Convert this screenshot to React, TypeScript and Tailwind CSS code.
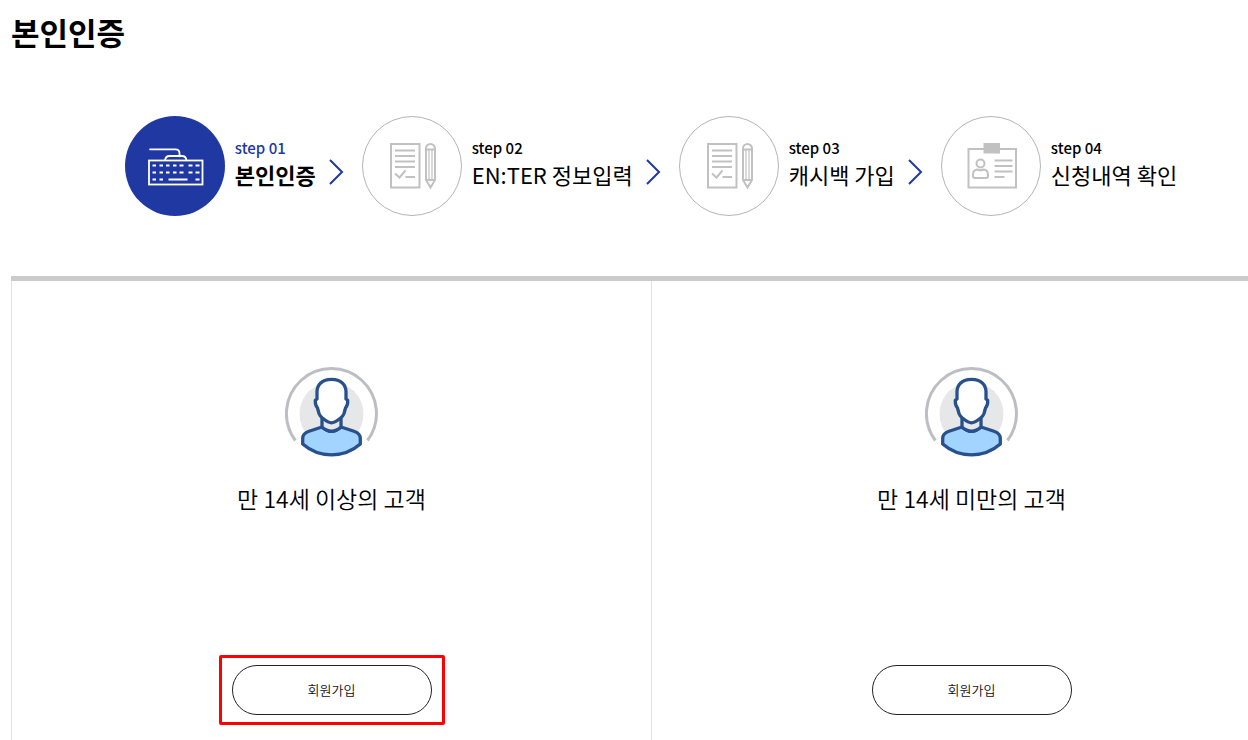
import type { ReactNode } from 'react'

function KeyboardIcon() {
    return (
        <svg viewBox="0 0 100 100" className="size-full" fill="none" stroke="#fff" strokeWidth="1.8" aria-hidden="true">
            <path d="M25 33.300h25.500q4 0 4 4v3" strokeLinecap="round" />
            <path d="M40 44.500q.5-4.500 4.500-4.500h12.500q4 0 4.500 4.500" />
            <rect x="24" y="44.500" width="53.500" height="24" />
            <path d="M27.500 49.500H31M34.500 49.500H38M41 49.500h3.500M48 49.500h3.500M54.500 49.500h4M63.500 49.500h4M70.500 49.500h4" />
            <path d="M27.500 56.500H31M34.500 56.500H38M41 56.500h3.500M48 56.500h3.500M54.500 56.500h4M63.500 56.500h4M70.500 56.500h4" />
            <path d="M27.500 63.500H31M34.500 63.500H38M43.500 63.500h19M70.500 63.500h4" />
        </svg>
    )
}

function FormIcon() {
    return (
        <svg viewBox="1 1 98 98" className="size-full" fill="none" stroke="#c1c1c1" strokeWidth="2" aria-hidden="true">
            <rect x="29" y="28" width="28.500" height="43.500" />
            <path d="M33 34.500h20M33 40h20M33 45.500h20M33 51h20M43.500 61H53M33 57.500l4.500 4 6-7" />
            <path d="M64 64V32.500a4.500 4.500 0 0 1 9 0V64L68.500 71.500zM64 33.500h9M64 64h9" />
            <path d="M67 33.500V64M70 33.500V64" strokeWidth="1.200" />
            <path d="M67 69h3L68.500 72z" fill="#c1c1c1" stroke="none" />
        </svg>
    )
}

function IdCardIcon() {
    return (
        <svg viewBox="1 1 98 98" className="size-full" fill="none" stroke="#c1c1c1" strokeWidth="2" aria-hidden="true">
            <rect x="27.500" y="33" width="47.500" height="38.500" />
            <rect x="42.500" y="27" width="16.500" height="10.500" fill="#c1c1c1" stroke="none" />
            <circle cx="39.500" cy="47.500" r="4" />
            <path d="M36.500 53.500q3 1.500 6 0 4.500 0 4.500 5.500v1q0 2-2 2h-11q-2 0-2-2v-1q0-5.500 4.500-5.500z" />
            <path d="M53.500 44.500h18M53.500 50h18M53.500 55.500h18M53.500 61h10" />
        </svg>
    )
}

function PersonIcon() {
    return (
        <svg viewBox="15 11 94 92" className="h-[92px] w-[94px]" fill="none" aria-hidden="true">
            <circle cx="61.500" cy="59" r="32" fill="#e6e7e9" />
            <path d="M25.400 85.500A45 45 0 1 1 97.500 85.500" stroke="#bcbec3" strokeWidth="3" />
            <g stroke="#28518b" strokeWidth="3.300" strokeLinejoin="round">
                <path d="M52 72L39 76.300Q32.700 78.500 32.700 83.500V89Q45 99.800 61.500 99.800T90.300 89V83.500Q90.300 78.500 84 76.300L71 72Q61.500 80.500 52 72z" fill="#a3d3ff" />
                <path d="M52 61V72Q61.500 80.500 71 72V61" fill="#e6e7e9" />
                <path d="M61.500 24.300C52 24.300 47 30 47 37V44L45.300 45.300Q45 50 47.500 53L49 58.500Q50 61.500 53 63.500Q58.500 67.800 61.500 67.800T70 63.500Q73 61.500 74 58.500L75.500 53Q78 50 77.700 45.300L76 44V37C76 30 71 24.300 61.500 24.300z" fill="#fff" />
            </g>
        </svg>
    )
}

function Arrow() {
    return (
        <svg viewBox="0 0 16 26" className="mt-3 h-[26px] w-4 shrink-0" fill="none" stroke="#2038a2" strokeWidth="2" aria-hidden="true">
            <path d="M2 1l12 12L2 25" />
        </svg>
    )
}

const steps: { no: string; title: string; icon: ReactNode; active?: boolean }[] = [
    { no: 'step 01', title: '본인인증', icon: <KeyboardIcon />, active: true },
    { no: 'step 02', title: 'EN:TER 정보입력', icon: <FormIcon /> },
    { no: 'step 03', title: '캐시백 가입', icon: <FormIcon /> },
    { no: 'step 04', title: '신청내역 확인', icon: <IdCardIcon /> },
]

const customers = [
    { title: '만 14세 이상의 고객', marked: true },
    { title: '만 14세 미만의 고객', marked: false },
]

function App() {
    return (
        <div className="min-h-screen overflow-hidden bg-white pl-[11px] font-['Noto_Sans_CJK_KR','Noto_Sans',sans-serif] text-black">
            <main className="flex min-h-screen min-w-[1280px] flex-col">
                <h1 className="pt-2 text-[31px] leading-[48px] font-bold">본인인증</h1>

                <ol className="mt-[60px] flex h-[100px] items-center justify-center">
                    {steps.map((step, i) => (
                        <li key={step.no} className="flex items-center">
                            {i > 0 && <div className="mr-[18px] ml-3"><Arrow /></div>}
                            <div className={step.active ? 'size-[100px] rounded-full bg-[#2038a2]' : 'size-[100px] rounded-full border border-[#b5b5b5]'}>
                                {step.icon}
                            </div>
                            <div className="ml-[10px] pb-[5px] whitespace-nowrap">
                                <p className={step.active ? 'text-[15px] leading-5 font-medium text-[#2038a2]' : 'text-[15px] leading-5 font-medium'}>{step.no}</p>
                                <p className={step.active ? 'text-[22px] leading-8 font-bold' : 'text-[22px] leading-8'}>{step.title}</p>
                            </div>
                        </li>
                    ))}
                </ol>

                <div className="mt-[60px] grid flex-1 grid-cols-2 border-t-[5px] border-[#cbcbcb]">
                    {customers.map((customer) => (
                        <section key={customer.title} className="flex flex-col items-center border-l border-[#e1e1e1] pt-[85px] pb-[25px]">
                            <PersonIcon />
                            <h2 className="mt-[22px] text-[23px] leading-9 font-[350]">{customer.title}</h2>
                            <div className="relative mt-[149px]">
                                <button type="button" className="h-[50px] w-[200px] rounded-full border border-[#222] text-[13px] font-[350] text-[#111]">
                                    회원가입
                                </button>
                                {customer.marked && <span className="pointer-events-none absolute -inset-x-[13px] -inset-y-[10px] rounded-xs border-3 border-[#f00]" />}
                            </div>
                        </section>
                    ))}
                </div>
            </main>
        </div>
    )
}

export default App
